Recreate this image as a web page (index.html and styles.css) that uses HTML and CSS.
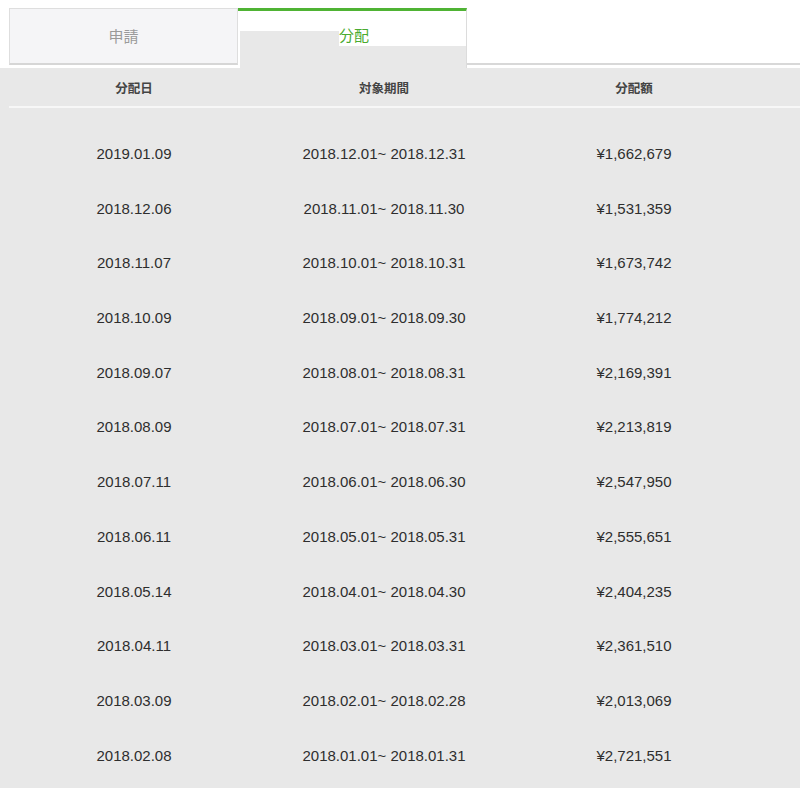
FILE: index.html
```html
<!DOCTYPE html>
<html lang="ja">
<head>
<meta charset="utf-8">
<title>分配</title>
<link rel="stylesheet" href="styles.css">
</head>
<body>
<div class="tabs">
  <div class="tab tab-idle">申請</div>
  <div class="tab tab-active">
    <div class="fill">
      <div class="fill-l"></div>
      <div class="fill-r"><span class="active-label">分配</span></div>
    </div>
  </div>
  <div class="tab-rest"></div>
</div>
<div class="content">
  <div class="head">
    <div>分配日</div><div>対象期間</div><div>分配額</div>
  </div>
  <div class="rows">
    <div>2019.01.09</div><div>2018.12.01~ 2018.12.31</div><div>¥1,662,679</div>
    <div>2018.12.06</div><div>2018.11.01~ 2018.11.30</div><div>¥1,531,359</div>
    <div>2018.11.07</div><div>2018.10.01~ 2018.10.31</div><div>¥1,673,742</div>
    <div>2018.10.09</div><div>2018.09.01~ 2018.09.30</div><div>¥1,774,212</div>
    <div>2018.09.07</div><div>2018.08.01~ 2018.08.31</div><div>¥2,169,391</div>
    <div>2018.08.09</div><div>2018.07.01~ 2018.07.31</div><div>¥2,213,819</div>
    <div>2018.07.11</div><div>2018.06.01~ 2018.06.30</div><div>¥2,547,950</div>
    <div>2018.06.11</div><div>2018.05.01~ 2018.05.31</div><div>¥2,555,651</div>
    <div>2018.05.14</div><div>2018.04.01~ 2018.04.30</div><div>¥2,404,235</div>
    <div>2018.04.11</div><div>2018.03.01~ 2018.03.31</div><div>¥2,361,510</div>
    <div>2018.03.09</div><div>2018.02.01~ 2018.02.28</div><div>¥2,013,069</div>
    <div>2018.02.08</div><div>2018.01.01~ 2018.01.31</div><div>¥2,721,551</div>
  </div>
</div>
</body>
</html>
```
FILE: styles.css
```css
html, body {
  margin: 0;
  padding: 0;
  background: #fff;
  font-family: "Liberation Sans", "Noto Sans CJK JP", sans-serif;
  height: 788px;
  overflow: hidden;
}
.tabs {
  display: flex;
  align-items: flex-start;
  padding: 8px 0 0 9px;
  height: 60px;
}
.tab {
  box-sizing: border-box;
  width: 229px;
  flex: none;
}
.tab-idle {
  height: 57px;
  background: #f5f5f7;
  border: 1px solid #dedede;
  border-bottom: 2px solid #d6d6d6;
  color: #9a9a9a;
  font-family: "Noto Sans CJK JP", sans-serif;
  font-size: 15px;
  display: flex;
  align-items: center;
  justify-content: center;
  padding-bottom: 2px;
}
.tab-active {
  height: 60px;
  background: #fff;
  border-top: 3px solid #4fb334;
  border-right: 1px solid #dcdcdc;
  display: flex;
  flex-direction: column;
  padding-top: 20px;
  padding-left: 2px;
}
.fill {
  flex: 1;
  display: flex;
}
.fill-l {
  width: 99px;
  background: #e8e8e8;
}
.fill-r {
  flex: 1;
  background: linear-gradient(#fff 15px, #e8e8e8 15px);
}
.active-label {
  display: block;
  margin-top: -6px;
  color: #4aab30;
  font-family: "Noto Sans CJK JP", sans-serif;
  font-size: 15px;
  line-height: 20px;
}
.tab-rest {
  flex: 1;
  height: 57px;
  box-sizing: border-box;
  border-bottom: 2px solid #d8d8d8;
}
.content {
  background: #e8e8e8;
  height: 720px;
}
.head {
  display: grid;
  grid-template-columns: 250px 250px 250px;
  margin-left: 9px;
  height: 38px;
  align-items: center;
  border-bottom: 2px solid #f7f7f7;
  font-family: "Noto Sans CJK JP", sans-serif;
  font-weight: 700;
  font-size: 12.5px;
  color: #444;
  text-align: center;
}
.rows {
  display: grid;
  grid-template-columns: 250px 250px 250px;
  grid-auto-rows: 54.73px;
  align-items: center;
  margin-left: 9px;
  padding-top: 18px;
  font-size: 15px;
  color: #2e2e2e;
  text-align: center;
}
```
